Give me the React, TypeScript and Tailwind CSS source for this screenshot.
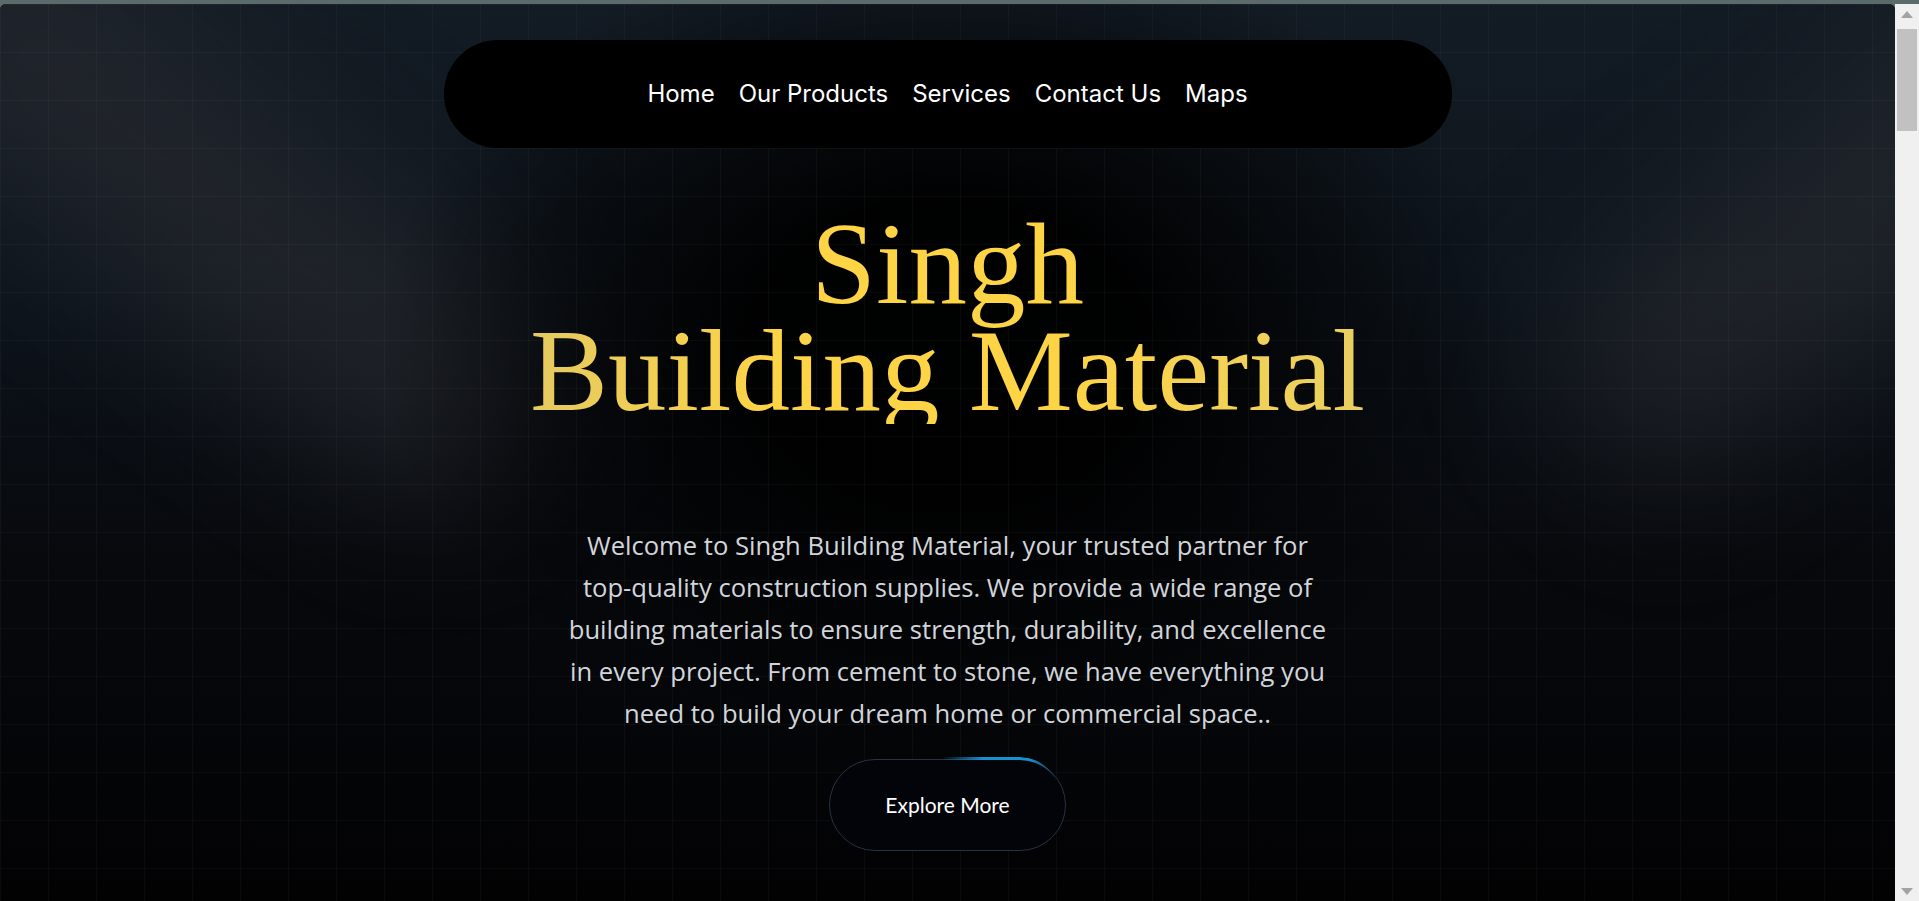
import React from "react";

export default function App() {
  return (
    <div className="h-[901px] w-full overflow-hidden bg-[#5b6a6b] pt-[4px] flex flex-col">
      <div className="flex flex-1 min-h-0">
        <main className="relative flex-1 overflow-hidden rounded-t-[6px] bg-[#030407]">
          {/* background layers */}
          <div className="pointer-events-none absolute inset-0 bg-[linear-gradient(180deg,#131b24_0%,#0e151d_30%,#07090d_62%,#020203_100%)]" />
          <div className="pointer-events-none absolute left-[-160px] top-[80px] h-[240px] w-[760px] rotate-[38deg] rounded-full bg-[#2b2d32] opacity-60 blur-[70px]" />
          <div className="pointer-events-none absolute left-[1520px] top-[120px] h-[220px] w-[620px] rotate-[-38deg] rounded-full bg-[#2b2d32] opacity-60 blur-[70px]" />
          <div className="pointer-events-none absolute inset-0 bg-[radial-gradient(ellipse_760px_560px_at_50%_38%,rgba(0,0,0,0.97)_25%,rgba(0,0,0,0)_75%)]" />
          <div className="pointer-events-none absolute inset-0 bg-[linear-gradient(rgba(255,255,255,0.03)_1px,transparent_1px),linear-gradient(90deg,rgba(255,255,255,0.03)_1px,transparent_1px)] bg-[size:48px_48px]" />

          <div className="relative flex flex-col items-center">
            <nav className="mt-[36px] flex h-[108px] w-[1008px] items-center justify-center gap-[24px] rounded-[54px] bg-black font-['Inter',sans-serif] text-[24px] text-white">
              <a>Home</a>
              <a>Our Products</a>
              <a>Services</a>
              <a>Contact Us</a>
              <a>Maps</a>
            </nav>

            <h1 className="mt-[62px] w-fit bg-[linear-gradient(90deg,#e5ca60_0%,#fdd446_30%,#fdd446_65%,#e9cf62_100%)] bg-clip-text text-center font-['Liberation_Serif',serif] text-[117px] font-normal leading-[107px] text-transparent">
              Singh
              <br />
              Building Material
            </h1>

            <p className="mt-[101px] text-center font-['Open_Sans',sans-serif] text-[25.6px] leading-[42px] text-[#d1d5db]">
              Welcome to Singh Building Material, your trusted partner for
              <br />
              top-quality construction supplies. We provide a wide range of
              <br />
              building materials to ensure strength, durability, and excellence
              <br />
              in every project. From cement to stone, we have everything you
              <br />
              need to build your dream home or commercial space..
            </p>

            <button className="relative mt-[24px] flex h-[92px] w-[237px] items-center justify-center rounded-full border border-[#283241] bg-[#020409] font-['Lato',sans-serif] text-[21px] text-white">
              <span className="pointer-events-none absolute left-[112px] top-[-3px] h-[40px] w-[118px] rounded-tr-[46px] border-t-[3px] border-[#1592d0] [mask-image:linear-gradient(90deg,transparent_0%,black_35%,black_75%,transparent_100%)]" />
              Explore More
            </button>
          </div>
        </main>

        <aside className="relative flex w-[24px] flex-col items-center bg-[#f0f0f0]">
          <svg width="12" height="7" viewBox="0 0 12 7" className="mt-[7px]">
            <path d="M0 7 L6 0 L12 7 Z" fill="#a3a3a3" />
          </svg>
          <div className="mt-[11px] h-[102px] w-[20px] bg-[#c1c1c1]" />
          <div className="flex-1" />
          <svg width="12" height="7" viewBox="0 0 12 7" className="mb-[6px]">
            <path d="M0 0 L6 7 L12 0 Z" fill="#a3a3a3" />
          </svg>
        </aside>
      </div>
    </div>
  );
}
